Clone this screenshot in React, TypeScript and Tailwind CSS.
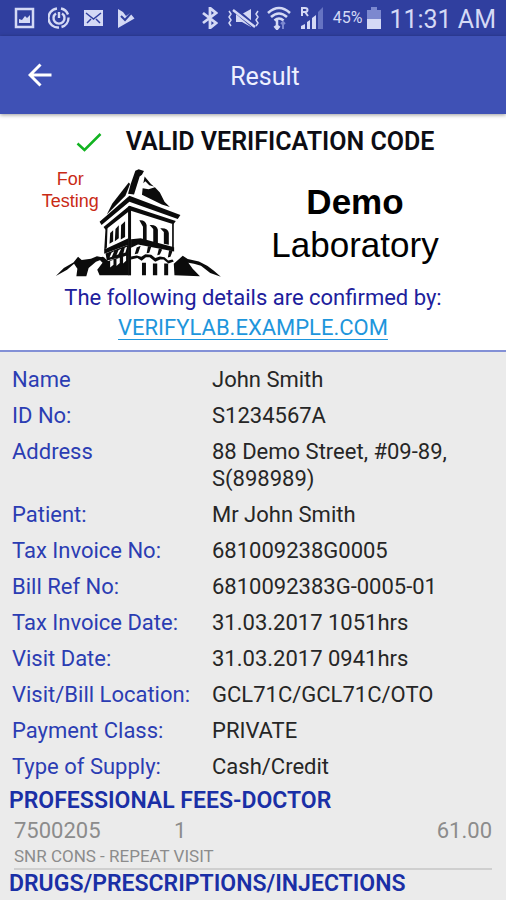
import type { ReactNode } from "react";

const DETAILS = [
  { label: "Name", value: "John Smith" },
  { label: "ID No:", value: "S1234567A" },
  { label: "Address", value: "88 Demo Street, #09-89, S(898989)" },
  { label: "Patient:", value: "Mr John Smith" },
  { label: "Tax Invoice No:", value: "681009238G0005" },
  { label: "Bill Ref No:", value: "6810092383G-0005-01" },
  { label: "Tax Invoice Date:", value: "31.03.2017 1051hrs" },
  { label: "Visit Date:", value: "31.03.2017 0941hrs" },
  { label: "Visit/Bill Location:", value: "GCL71C/GCL71C/OTO" },
  { label: "Payment Class:", value: "PRIVATE" },
  { label: "Type of Supply:", value: "Cash/Credit" },
];

const FEES = [
  {
    code: "7500205",
    quantity: "1",
    amount: "61.00",
    description: "SNR CONS - REPEAT VISIT",
  },
];

export default function App() {
  return (
    <div className="min-h-screen bg-[#ebebeb] font-[Roboto,'Liberation_Sans',sans-serif] text-[22px] leading-[27px] text-[#262626]">
      <StatusBar />
      <Header />
      <main>
        <Verification />
        <dl className="flex flex-col gap-[9px] px-3 pt-[14px] pb-[7px]">
          {DETAILS.map((item) => (
            <div key={item.label} className="flex">
              <dt className="w-[200px] shrink-0 text-[#2b3db3]">
                {item.label}
              </dt>
              <dd className="max-w-[260px]">{item.value}</dd>
            </div>
          ))}
        </dl>
        <SectionTitle>PROFESSIONAL FEES-DOCTOR</SectionTitle>
        <FeeTable />
        <SectionTitle>DRUGS/PRESCRIPTIONS/INJECTIONS</SectionTitle>
      </main>
    </div>
  );
}

function SectionTitle({ children }: { children: ReactNode }) {
  return (
    <h2 className="px-[9px] text-[23px] font-semibold text-[#1a2fa6]">
      {children}
    </h2>
  );
}

function FeeTable() {
  return (
    <div className="px-[14px] pt-[3px]">
      <table className="w-full border-b-2 border-[#cfcfcf] text-[#8c8c8c]">
        {FEES.map((fee) => (
          <tbody key={fee.code}>
            <tr>
              <td className="w-40 p-0">{fee.code}</td>
              <td className="p-0">{fee.quantity}</td>
              <td className="p-0 text-right">{fee.amount}</td>
            </tr>
            <tr>
              <td colSpan={3} className="p-0 text-[17px] leading-6">
                {fee.description}
              </td>
            </tr>
          </tbody>
        ))}
      </table>
    </div>
  );
}

function Header() {
  return (
    <header className="relative z-10 flex h-[78px] items-center bg-[#3f51b5] px-7 text-[#eef0ff] shadow-[0_1px_4px_rgba(0,0,0,0.4)]">
      <button type="button" aria-label="Back" className="w-6">
        <svg viewBox="0 0 24 24" className="size-6" fill="none">
          <path d="M23.5 12H2M12.5 1.5 2 12l10.500 10.500" stroke="#fff" strokeWidth="3" />
        </svg>
      </button>
      <h1 className="flex-1 pt-1 text-center text-[25px] leading-8">Result</h1>
    </header>
  );
}

function Verification() {
  return (
    <section className="border-b-2 border-[#8390d6] bg-white pt-[14px] pb-[7px] text-center">
      <div className="flex items-center justify-center gap-6 pl-1">
        <svg viewBox="0 0 26 20" className="h-5 w-[26px]" fill="none">
          <path d="m1.500 11.500 7 6.500L24.500 2" stroke="#12b321" strokeWidth="2.500" />
        </svg>
        <h2 className="text-[25px] leading-7 font-semibold text-[#0d0d14]">
          VALID VERIFICATION CODE
        </h2>
      </div>
      <div className="flex h-[127px] items-start justify-center pt-3 pr-7">
        <div className="relative w-[184px]">
          <p className="absolute top-0 left-0 w-[62px] font-['Liberation_Sans',Arial,sans-serif] text-lg leading-[22px] text-[#c92a15]">
            For Testing
          </p>
          <TowerLogo />
        </div>
        <div className="ml-12 pt-3 font-['Liberation_Sans',Arial,sans-serif] text-[35px] leading-[43px] text-black">
          <p className="font-bold">Demo</p>
          <p>Laboratory</p>
        </div>
      </div>
      <p className="leading-[30px] text-[#20209c]">
        The following details are confirmed by:
      </p>
      <p className="leading-[30px]">
        <a
          href="https://verifylab.example.com"
          className="text-[#1e96dc] underline decoration-1 underline-offset-4"
        >
          VERIFYLAB.EXAMPLE.COM
        </a>
      </p>
    </section>
  );
}

function TowerLogo() {
  return (
    <svg viewBox="80 142 506 332" className="ml-4 h-[110px] w-[168px]" fill="#0b0b0b">
      {/* roof */}
      <path d="M322 150 332 146 348 151 342 162 335 168 318 222 300 220 308 190Z" />
      <path d="M302 186 306 190 292 226 236 282 252 250Z" />
      <path d="M350 168 369 190 378 198 364 194 352 182 346 188Z" />
      <path d="M344 203 362 206 381 200 396 216 410 244 426 260 402 252 342 223Z" />
      {/* eaves */}
      <path d="M214 304 304 226 458 284 450 296 304 244 220 314Z" />
      <path d="M226 320 304 256 444 302 437 312 306 270 232 328Z" />
      {/* walls */}
      <path d="M300 258H309V466H300Z" />
      <path d="M232 323 238 320 236 382 228 390ZM433 310H438V382H433Z" />
      <path d="M246 338 255 330V364L244 371ZM262 326 272 315V354L260 363ZM279 314 291 303V350L278 358Z" />
      <path d="M334 300Q352 298 356 314V362L345 357V319ZM365 314Q387 312 390 328V370L376 366V326ZM397 324Q421 322 423 338V374L408 371V335Z" />
      <path d="M228 388 301 354V374L228 401ZM309 357 338 354 439 381V394L330 373 309 383Z" />
      {/* corbels */}
      <path d="M232 400 301 374V406L236 421Z" />
      <path d="M250 398 258 393 251 410 244 412ZM271 390 279 386 271 402 265 405ZM290 383 297 380 292 397 286 399Z" fill="#fff" />
      <path d="M326 382 338 377 330 400 320 402ZM360 378 370 380 364 398 356 399ZM393 385 403 388 396 403 388 405ZM424 390 434 393 428 410 420 412Z" />
      <path d="M309 409 326 406 340 410 352 402 370 404 382 414 396 409 410 411 421 421 434 418 438 424 422 430 407 418 397 418 382 425 365 411 354 411 341 422 328 414 309 418Z" />
      <path d="M342 428H354V466H342ZM375 430H388V466H375ZM409 430H421V466H409Z" />
      {/* rocks */}
      <path d="M214 466 207 449 223 428 209 414 224 410 240 423 301 402V466Z" />
      <path d="M246 423 256 419V434L246 442ZM265 417 275 413V429L265 438ZM285 410 294 407V422L285 430Z" fill="#fff" />
      <path d="M82 468 106 444 135 427 149 410 160 420 188 416 206 408 232 414 203 425 181 444 174 469 144 469 147 446 137 431 116 449Z" />
      <path d="M438 431 465 407 480 417 514 424 540 438 559 452 580 470 548 459 520 437 499 431 482 428 495 446 517 469 440 466Z" />
    </svg>
  );
}

function StatusBar() {
  return (
    <div className="flex h-9 items-center bg-[#303f9f] pr-[10px] pl-[14px] text-[#d4d9f5]">
      <div className="flex items-center gap-[13px]">
        <svg viewBox="0 0 21 22" className="h-[22px] w-[21px]" fill="none">
          <path d="M2 2h17v18H2z" stroke="currentColor" strokeWidth="2.500" />
          <path d="M5 16V12l3 1 3-4 2 2 3-3v8z" fill="currentColor" />
        </svg>
        <svg viewBox="0 0 22 22" className="size-[22px]" fill="none" stroke="currentColor" strokeWidth="2.400">
          <path d="M9 1.500a9.500 9.500 0 1 0 2 19M13 1.500a9.500 9.500 0 0 1 7 6M20.500 10.500a9.500 9.500 0 0 1-7 9.500" />
          <path d="M8 6.500a5.500 5.500 0 1 0 6 0M11 5v6" />
        </svg>
        <svg viewBox="0 0 21 18" className="h-[18px] w-[21px]">
          <path d="M1 1h19v16H1z" fill="currentColor" />
          <path d="m3 4 7.500 6L18 4M4 14l4-4m9 4-4-4" fill="none" stroke="#303f9f" strokeWidth="1.500" />
        </svg>
        <svg viewBox="0 0 18 21" className="h-[21px] w-[18px]">
          <path d="M1 1 6 4 9 8 13 5 17.500 10.500 1 20z" fill="currentColor" />
          <path d="m4 8 4 4 7-8" fill="none" stroke="#303f9f" strokeWidth="2" />
        </svg>
      </div>
      <div className="ml-auto flex items-center">
        <svg viewBox="0 0 16 22" className="h-[22px] w-4" fill="none">
          <path d="m1 6 13 10-6 5V1l6 5L1 16" stroke="currentColor" strokeWidth="2.800" />
        </svg>
        <svg viewBox="0 0 34 20" className="ml-[9px] h-5 w-[34px]" fill="none">
          <path d="M9 6h6l9-5v18l-9-5H9z" fill="currentColor" />
          <path d="m7 1 21 18" stroke="#303f9f" strokeWidth="5" />
          <path d="m6 2 22 17" stroke="currentColor" strokeWidth="2.500" />
          <path d="m2 3 2 3-2 3 2 3-2 3 2 3M31 3l-2 3 2 3-2 3 2 3-2 3" stroke="currentColor" strokeWidth="1.500" />
        </svg>
        <svg viewBox="0 0 24 24" className="ml-[6px] size-6" fill="none">
          <path d="M1 7Q12-3 23 7M4 11q8-7 16 0M7.500 14.500q4.500-4 9 0" stroke="currentColor" strokeWidth="2.600" />
          <path d="M10 14v9m-2.500-3 2.500 3 2.500-3" stroke="currentColor" strokeWidth="2.500" />
          <path d="M16 23v-7m-2 2 2-2 2 2" stroke="#7c88cf" strokeWidth="2" />
        </svg>
        <svg viewBox="0 0 24 24" className="ml-[9px] size-6" fill="none">
          <path d="M2 10V2h3q2.500 0 2.500 2T5 6H2m3 0 3 4" stroke="currentColor" strokeWidth="2" />
          <path d="M1 23v-3l4-2v5zM7 23v-7l3-2v9zM12 23V12l4-3v14z" fill="currentColor" />
          <path d="M18 23V6l5-5v22z" fill="#6573c2" />
        </svg>
        <span className="ml-[9px] text-base leading-5">45%</span>
        <svg viewBox="0 0 16 24" className="ml-[4px] h-6 w-4">
          <path d="M5 1h6v3h4v19H1V4h4z" fill="#7c88cf" />
          <path d="M1 13h14v10H1z" fill="currentColor" />
        </svg>
        <span className="ml-[7px] pt-1 text-[25px] leading-7">11:31 AM</span>
      </div>
    </div>
  );
}
